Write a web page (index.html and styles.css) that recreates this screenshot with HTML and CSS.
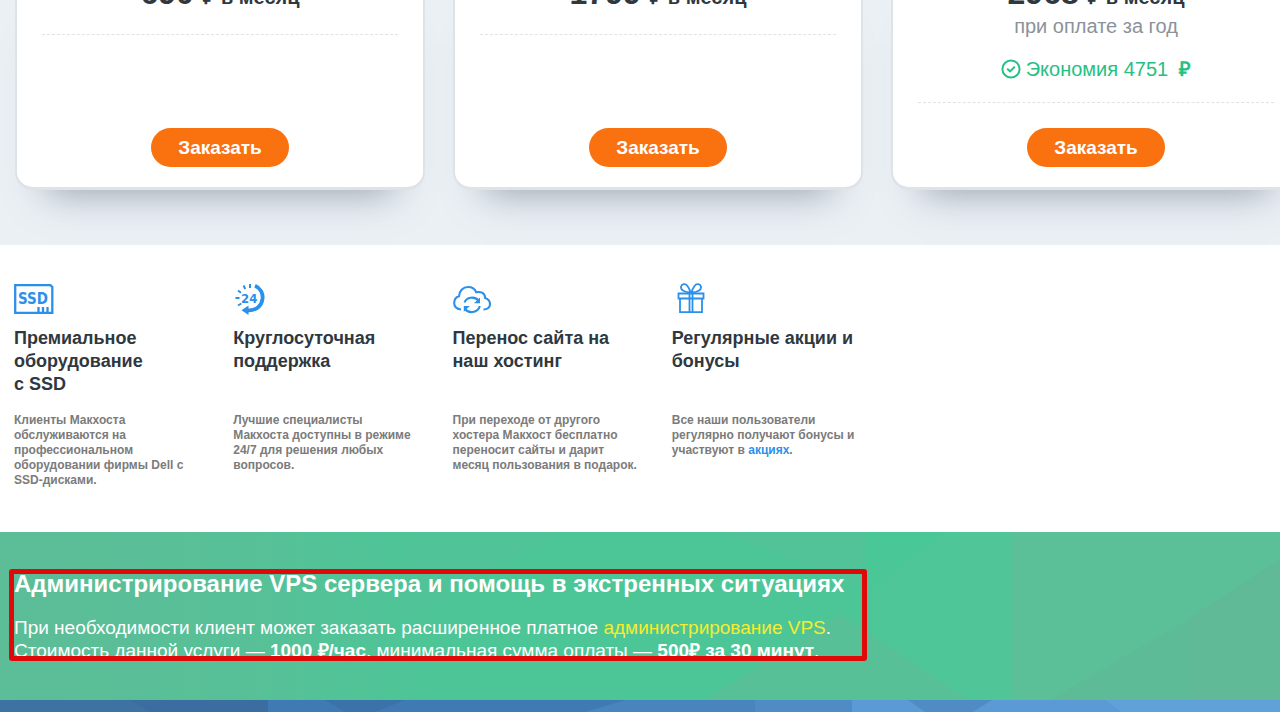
FILE: index.html
```
<!DOCTYPE html>
<html lang="ru">
<head>
    <meta charset="utf-8">
    <title>Тарифы VPS</title>
    <link rel="stylesheet" href="styles.css">
</head>
<body>
    <section class="pricing">
        <div class="plans">
            <article class="plan">
                <div class="plan-top">
                    <p class="price"><span class="sum">690</span> ₽ в месяц</p>
                </div>
                <button type="button" class="btn">Заказать</button>
            </article>
            <article class="plan">
                <div class="plan-top">
                    <p class="price"><span class="sum">1799</span> ₽ в месяц</p>
                </div>
                <button type="button" class="btn">Заказать</button>
            </article>
            <article class="plan">
                <div class="plan-top">
                    <p class="price"><span class="sum">2968</span> ₽ в месяц</p>
                    <p class="term">при оплате за год</p>
                    <p class="saving">
                        <svg width="20" height="20" viewBox="0 0 20 20" fill="none" stroke="currentColor" stroke-width="2" stroke-linecap="round" stroke-linejoin="round">
                            <circle cx="10" cy="10" r="8.6"/>
                            <path d="M6.8 10.2 L9.2 12.4 L13.2 8.2"/>
                        </svg>
                        <span>Экономия 4751 &nbsp;<b>₽</b></span>
                    </p>
                </div>
                <button type="button" class="btn">Заказать</button>
            </article>
        </div>
    </section>

    <section class="features">
        <div class="features-grid">
            <div class="feature">
                <svg class="icon" width="40" height="32" viewBox="0 0 40 32">
                    <path d="M1.2 2.2 H36.5 L38.3 4 V29.8 H1.2 Z" fill="none" stroke="#2b90ea" stroke-width="2.3"/>
                    <text class="icon-ssd" x="4" y="21">SSD</text>
                    <path d="M24.5 24 V30 M29 24 V30 M33.5 24 V30" stroke="#2b90ea" stroke-width="2.3"/>
                </svg>
                <h3>Премиальное оборудование<br>с SSD</h3>
                <p>Клиенты Макхоста обслуживаются на профессиональном оборудовании фирмы Dell с SSD-дисками.</p>
            </div>
            <div class="feature">
                <svg class="icon" width="40" height="32" viewBox="0 0 40 32" fill="none" stroke="#2b90ea">
                    <path d="M22 2.8 C27.5 5 30.3 10.5 29.5 16 C28.6 23 23 27.8 15 27.3" stroke-width="3.8"/>
                    <path d="M8.5 27.3 L15.5 22.5 V32 Z" fill="#2b90ea" stroke="none"/>
                    <path d="M17 1 V5 M10.5 2.5 L12.3 6 M5 7.5 L8 9.7 M2.5 15 H6.5 M5 22.5 L8.3 20.5" stroke-width="2"/>
                    <text class="icon-24" x="8" y="20">24</text>
                </svg>
                <h3>Круглосуточная поддержка</h3>
                <p>Лучшие специалисты<br>Макхоста доступны в режиме 24/7 для решения любых вопросов.</p>
            </div>
            <div class="feature">
                <svg class="icon" width="40" height="32" viewBox="0 0 40 32" fill="none" stroke="#2b90ea" stroke-width="2.1">
                    <path d="M8 26.5 C3.5 26 1.2 23.3 1.2 20 C1.2 16.5 3 14 6 13.2 C6 8 10 4 15 4 C19 4 22 6 23.2 9.3 C28 8 32 10.5 32.2 15 C35.2 16 37 18.5 37 21 C37 24.3 34.5 26.5 30.5 26.5"/>
                    <path d="M11.5 19.5 C13.5 14 21.5 13 25.5 17.5 M26.8 23 C25 30 15.5 31 12 25.8"/>
                    <path d="M27 14.5 V20.3 H21 Z M10.8 28.8 V23 H16.8 Z" fill="#2b90ea" stroke="none"/>
                </svg>
                <h3>Перенос сайта на наш хостинг</h3>
                <p>При переходе от другого хостера Макхост бесплатно переносит сайты и дарит месяц пользования в подарок.</p>
            </div>
            <div class="feature">
                <svg class="icon" width="40" height="32" viewBox="0 0 40 32" fill="none" stroke="#2b90ea" stroke-width="1.8">
                    <path d="M6.5 10.5 H31.5 V15.5 H6.5 Z M8 15.5 H30 V29.2 H8 Z"/>
                    <path d="M17.5 10.5 V29.2 M20.5 10.5 V29.2"/>
                    <path d="M18.5 9.5 C12.5 9.5 8.5 7 9 3.8 C9.6 .8 13.5 .2 15.5 3 C17 5 18 7.5 18.5 9.5 Z M19.5 9.5 C25.5 9.5 29.5 7 29 3.8 C28.4 .8 24.5 .2 22.5 3 C21 5 20 7.5 19.5 9.5 Z"/>
                </svg>
                <h3>Регулярные акции и бонусы</h3>
                <p>Все наши пользователи регулярно получают бонусы и участвуют в <a href="#">акциях</a>.</p>
            </div>
        </div>
    </section>

    <section class="admin">
        <svg class="pattern" viewBox="0 0 1280 168" preserveAspectRatio="none">
            <defs>
                <linearGradient id="green">
                    <stop offset="0" stop-color="#5cbd97"/>
                    <stop offset=".2" stop-color="#57c097"/>
                    <stop offset=".33" stop-color="#4dc597"/>
                    <stop offset=".66" stop-color="#4cc697"/>
                    <stop offset=".79" stop-color="#50c598"/>
                </linearGradient>
            </defs>
            <rect width="1280" height="168" fill="url(#green)"/>
            <path d="M410 0 H560 L400 90 Z" fill="#51c398"/>
            <path d="M720 0 H865 V55 Z" fill="#52c398"/>
            <path d="M865 0 H945 L865 60 Z" fill="#49c796"/>
            <path d="M705 168 L840 82 L970 168 Z" fill="#57c097"/>
            <path d="M1012 0 H1280 V168 H1012 Z" fill="#5bbf98"/>
            <path d="M1280 28 L1187 88 L1050 168 H1280 Z" fill="#5dbc97"/>
            <path d="M1280 28 L1187 88 V168 H1280 Z" fill="#60b997"/>
        </svg>
        <div class="notice">
            <h2>Администрирование VPS сервера и помощь в экстренных ситуациях</h2>
            <p>При необходимости клиент может заказать расширенное платное <a href="#">администрирование VPS</a>.<br>
            Стоимость данной услуги — <b>1000 ₽/час</b>, минимальная сумма оплаты — <b>500₽ за 30 минут</b>.</p>
        </div>
    </section>

    <footer class="footer">
        <svg class="pattern" viewBox="0 0 1280 12" preserveAspectRatio="none">
            <path d="M0 0 H270 V12 H0 Z" fill="#3e72a3"/>
            <path d="M130 0 H270 V12 H150 Z" fill="#3c6da0"/>
            <path d="M268 0 H625 L585 12 H268 Z" fill="#3f7ab4"/>
            <path d="M325 0 H405 L375 12 H345 Z" fill="#3b72aa"/>
            <path d="M625 0 H757 V12 H585 Z" fill="#4884be"/>
            <path d="M755 0 H854 V12 H755 Z" fill="#4f8cc6"/>
            <path d="M852 0 H1280 V12 H852 Z" fill="#5b9ad4"/>
            <path d="M908 0 H992 L973 12 H925 Z" fill="#4f8cc6"/>
            <path d="M1105 0 H1280 V12 H1122 Z" fill="#61a1da"/>
        </svg>
    </footer>
</body>
</html>
```
FILE: styles.css
```
* { box-sizing: border-box; }
body { margin: 0; background: #fff; color: #2f383f; font-family: "Liberation Sans", Arial, sans-serif; overflow-x: hidden; }
h2, h3, p { margin: 0; }

/* Pricing */
.pricing { margin-top: -23px; padding: 0 15px 55px; background: #ebf0f5; overflow: hidden; }
.plans { display: flex; gap: 28px; }
.plan { flex: 0 0 410px; display: flex; flex-direction: column; align-items: center; padding: 0 25px 20px; background: #fff; border: 2px solid #dde3e7; border-top: 0; border-bottom-width: 3px; border-radius: 0 0 18px 18px; box-shadow: 0 34px 36px -32px rgba(60, 75, 95, 0.5); }
.plan-top { width: 100%; padding-bottom: 21px; border-bottom: 1px dashed #dfe3e6; text-align: center; }
.plan:last-child .plan-top { margin-bottom: 25px; }
.price { font-size: 20px; font-weight: bold; line-height: 32px; }
.sum { margin-right: 4px; font-size: 32px; }
.term { margin-top: 1px; color: #8b9299; font-size: 20px; line-height: 24px; }
.saving { display: flex; justify-content: center; align-items: center; gap: 5px; margin-top: 19px; color: #25c083; font-size: 20px; line-height: 24px; }
.btn { margin-top: auto; padding: 0 27px; height: 39px; flex-shrink: 0; background: #fa720f; color: #fff; border: none; border-radius: 20px; font-family: inherit; font-size: 19px; font-weight: bold; cursor: pointer; }

/* Features */
.features { padding: 38px 14px 44px; }
.features-grid { display: grid; grid-template-columns: repeat(4, 1fr); gap: 29px; max-width: 848px; }
.icon { display: block; margin-bottom: 12px; }
.icon-ssd { fill: #2b90ea; font-family: "DejaVu Sans Condensed", "DejaVu Sans", sans-serif; font-size: 15px; font-weight: bold; }
.icon-24 { fill: #2b90ea; stroke: none; font-family: "DejaVu Sans Condensed", "DejaVu Sans", sans-serif; font-size: 13px; font-weight: bold; }
.feature h3 { min-height: 69px; margin-bottom: 17px; font-size: 18px; line-height: 23px; }
.feature p { color: #7b7b7b; font-size: 12px; font-weight: bold; line-height: 15px; }
.feature a { color: #2b90ea; text-decoration: none; }

/* Administration */
.admin { position: relative; padding: 37px 14px 39px; color: #fff; }
.pattern { position: absolute; top: 0; left: 0; width: 100%; height: 100%; }
.notice { position: relative; max-width: 848px; height: 92px; }
.notice::after { content: ""; position: absolute; inset: 0 -5px; border: 5px solid #e00808; border-radius: 3px; pointer-events: none; }
.notice h2 { margin-bottom: 17px; font-size: 24px; line-height: 30px; white-space: nowrap; }
.notice p { font-size: 19px; line-height: 23px; white-space: nowrap; }
.notice a { color: #f5ec2e; text-decoration: none; }

.footer { position: relative; height: 12px; background: #3f7ab4; }
```
